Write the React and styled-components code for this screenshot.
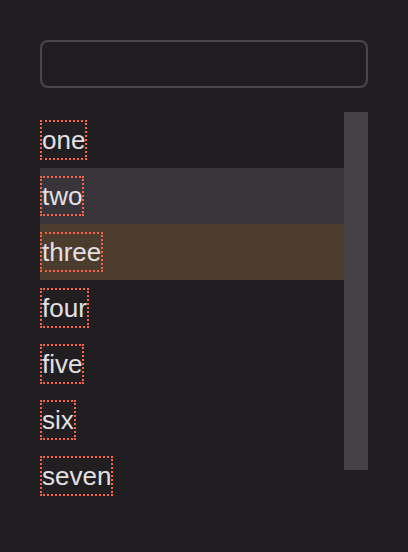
import React from 'react';
import styled, { createGlobalStyle } from 'styled-components';

const Global = createGlobalStyle`
    html, body {
        margin: 0;
        padding: 0;
        background: #211e22;
    }
    body {
        font-family: "Liberation Sans", Arial, sans-serif;
        color: #e3e0e4;
    }
`

const Page = styled.div`
    padding: 40px;
    display: flex;
    flex-direction: column;
    gap: 24px;
`

const Search = styled.input`
    box-sizing: border-box;
    width: 328px;
    height: 48px;
    border: 2px solid #4a464b;
    border-radius: 8px;
    background: transparent;
    outline: none;
    color: #e3e0e4;
    font: inherit;
    font-size: 18px;
    padding: 0 12px;
`

const ListArea = styled.div`
    display: flex;
    align-items: flex-start;
    width: 328px;
`

const List = styled.ul`
    list-style: none;
    margin: 0;
    padding: 0;
    flex: 1;
`

const Row = styled.li`
    height: 56px;
    display: flex;
    align-items: center;
    background: ${p => p.$selected ? '#4b3c2e' : p.$hover ? '#38343a' : 'transparent'};
`

const Label = styled.span`
    font-size: 26px;
    line-height: 36px;
    border: 2px dotted #ff6347;
    padding: 0;
`

const Track = styled.div`
    width: 24px;
    height: 358px;
    background: #454145;
    flex-shrink: 0;
`

const items = ['one', 'two', 'three', 'four', 'five', 'six', 'seven']

const App = () => {
    return (
        <>
            <Global />
            <Page>
                <Search />
                <ListArea>
                    <List>
                        {items.map((item, i) => (
                            <Row key={item} $hover={i === 1} $selected={i === 2}>
                                <Label>{item}</Label>
                            </Row>
                        ))}
                    </List>
                    <Track />
                </ListArea>
            </Page>
        </>
    )
}

export default App
